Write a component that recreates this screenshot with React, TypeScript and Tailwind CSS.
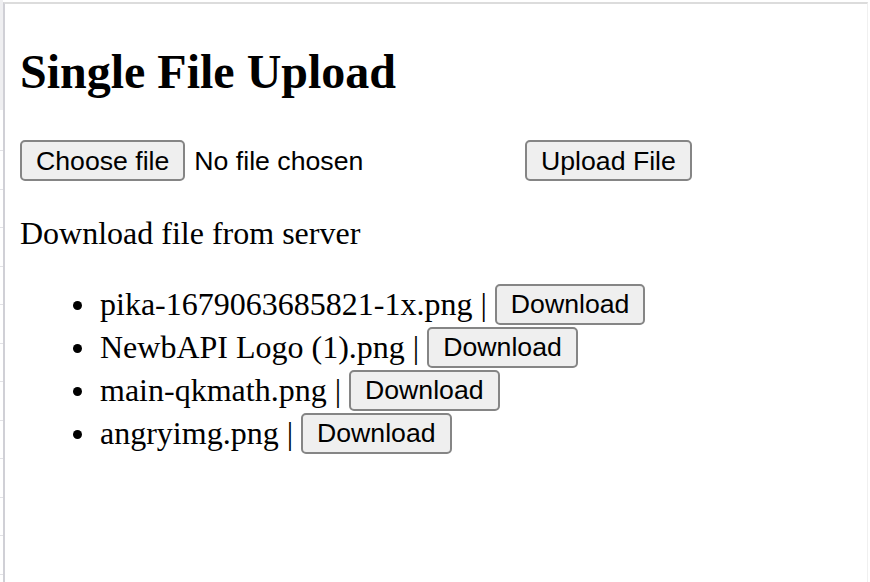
import React from 'react';

const files = [
  'pika-1679063685821-1x.png',
  'NewbAPI Logo (1).png',
  'main-qkmath.png',
  'angryimg.png',
];

const serif = { fontFamily: '"Liberation Serif", "Times New Roman", serif' };

function NativeButton({ children }: { children: React.ReactNode }) {
  return (
    <button
      type="button"
      className="h-[41px] px-[14px] bg-[#efefef] border-2 border-[#858585] rounded-[5px] text-[26.67px] leading-[30px] text-black font-['Liberation_Sans',Arial,sans-serif] whitespace-nowrap"
    >
      {children}
    </button>
  );
}

export default function App() {
  const ticks = Array.from({ length: 12 });

  return (
    <div className="w-[870px] h-[582px] bg-white flex overflow-hidden">
      {/* left gutter with faint ticks */}
      <div className="w-[3px] flex flex-col">
        <div className="h-[110px] bg-[#efeff1]" />
        <div className="flex flex-col pt-[40px] gap-[37.5px]">
          {ticks.map((_, i) => (
            <div key={i} className="h-px bg-[#e2e2e6]" />
          ))}
        </div>
      </div>

      <div className="flex-1 mt-[2px] mr-[2px] border-t-2 border-l-2 border-t-[#dcdcdc] border-l-[#d0d0d6] border-r border-r-[#f0f0f0] pl-[15px] text-black" style={serif}>
        <h2 className="mt-[40px] text-[48px] leading-[55px] font-bold">Single File Upload</h2>

        <div className="mt-[41px] flex items-center">
          <div className="w-[497px] flex items-center">
            <NativeButton>Choose file</NativeButton>
            <span className="ml-[9px] text-[26.67px] font-['Liberation_Sans',Arial,sans-serif]">No file chosen</span>
          </div>
          <div className="ml-[8px]">
            <NativeButton>Upload File</NativeButton>
          </div>
        </div>

        <p className="mt-[34px] text-[32px] leading-[37px]">Download file from server</p>

        <ul className="mt-[31px] pl-[53px] text-[32px]">
          {files.map((name) => (
            <li key={name} className="h-[43px] flex items-center">
              <span className="w-[9px] h-[9px] rounded-full bg-black mr-[18px] translate-y-[1px]" />
              <span className="leading-[37px] whitespace-nowrap">{name} |</span>
              <span className="ml-[8px] mb-[5px]">
                <NativeButton>Download</NativeButton>
              </span>
            </li>
          ))}
        </ul>
      </div>
    </div>
  );
}
